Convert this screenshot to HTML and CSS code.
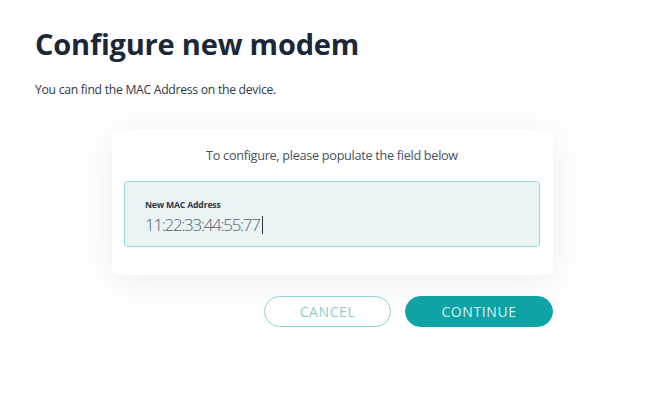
FILE: index.html
```html
<!DOCTYPE html>
<html lang="en">
<head>
<meta charset="utf-8">
<title>Configure new modem</title>
<link rel="stylesheet" href="styles.css">
</head>
<body>
<main class="page">
  <h1 class="title">Configure new modem</h1>
  <p class="subtitle">You can find the MAC Address on the device.</p>
  <section class="card">
    <p class="card-intro">To configure, please populate the field below</p>
    <div class="field">
      <label class="field-label">New MAC Address</label>
      <div class="field-value"><span>11:22:33:44:55:77</span><span class="caret"></span></div>
    </div>
  </section>
  <div class="actions">
    <button class="btn btn-outline">CANCEL</button>
    <button class="btn btn-solid">CONTINUE</button>
  </div>
</main>
</body>
</html>
```
FILE: styles.css
```css
* { box-sizing: border-box; }
html, body { margin: 0; background: #ffffff; }
body { font-family: "Open Sans", "Noto Sans", sans-serif; color: #1c2a39; }
.page { padding: 23px 0 0 35px; width: 646px; height: 410px; }
.title {
  margin: 0;
  font-size: 29px;
  font-weight: 700;
  line-height: 42px;
  color: #1b2838;
  letter-spacing: -0.2px;
}
.subtitle {
  margin: 17px 0 0;
  font-size: 12.2px;
  line-height: 16px;
  color: #2e3a46;
  letter-spacing: -0.28px;
}
.card {
  margin: 31px 0 0 77px;
  width: 441px;
  height: 146px;
  background: #fff;
  border-radius: 6px;
  box-shadow: 0 6px 40px rgba(0, 0, 0, 0.075);
  padding: 17px 13px 0 12px;
}
.card-intro {
  margin: 0;
  text-align: center;
  font-size: 12.7px;
  line-height: 18px;
  color: #47525e;
  letter-spacing: -0.3px;
}
.field {
  margin-top: 17px;
  height: 66px;
  background: #ebf4f4;
  border: 1.5px solid #93dadb;
  border-radius: 4px;
  padding: 18px 0 0 20px;
}
.field-label {
  display: block;
  font-size: 8.7px;
  font-weight: 700;
  line-height: 10px;
  color: #2e3a46;
  letter-spacing: -0.2px;
}
.field-value {
  display: flex;
  align-items: center;
  margin-top: 5px;
  font-size: 17px;
  font-weight: 300;
  line-height: 20px;
  color: #56606a;
  letter-spacing: -1.3px;
}
.caret {
  width: 1px;
  height: 18px;
  background: #333;
  margin-left: 2px;
}
.actions {
  display: flex;
  justify-content: flex-end;
  gap: 14px;
  width: 518px;
  margin-top: 21px;
}
.btn {
  height: 31px;
  border-radius: 16px;
  font-family: "Open Sans", "Noto Sans", sans-serif;
  font-size: 14px;
  letter-spacing: 0.6px;
  cursor: pointer;
}
.btn-outline {
  width: 127px;
  background: #fff;
  border: 1.5px solid #8dd4d8;
  color: #8ccdd2;
}
.btn-solid {
  width: 148px;
  background: #10a3a6;
  border: 1px solid #10a3a6;
  color: #d6f0f0;
}
```
